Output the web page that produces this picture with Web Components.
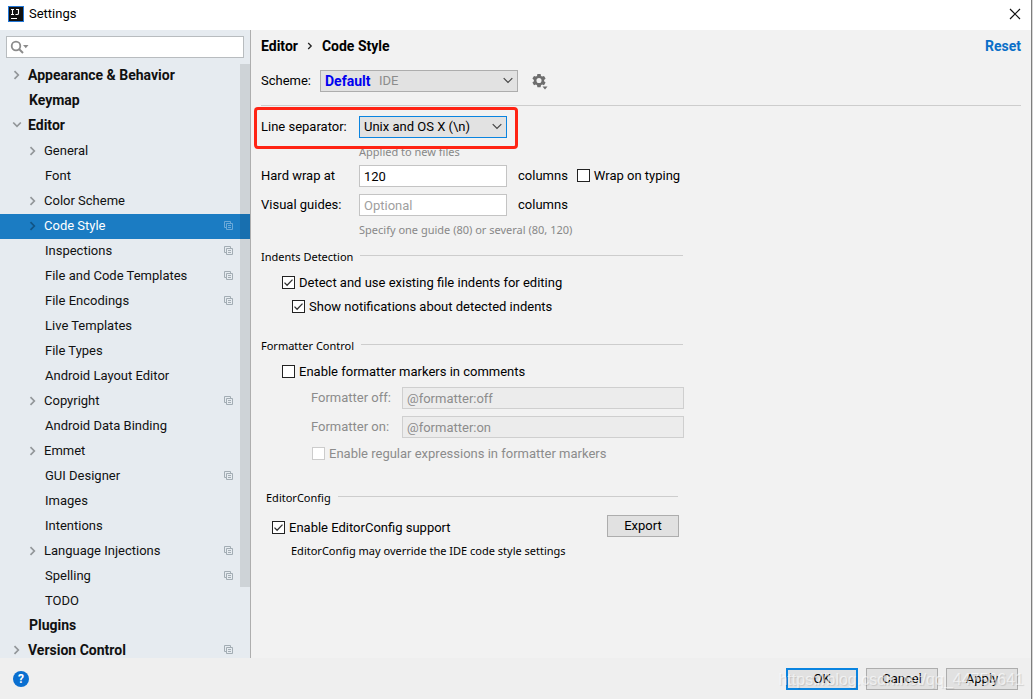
<!DOCTYPE html>
<html lang="en">
<head>
<meta charset="utf-8">
<title>Settings</title>
<style>
  html, body { height: 100%; }
  body {
    margin: 0;
    font: 13px/16px Roboto, "Noto Sans", sans-serif;
    color: #000;
    --small: 11px/16px "Noto Sans", sans-serif;
    --bold: bold 14px/16px Roboto, sans-serif;
    --line: #cdcdcd;
    --border: #adadad;
    --field: #c4c4c4;
    --blue: #0a84e0;
    --muted: #888;
  }
</style>
</head>
<body>
<settings-window></settings-window>

<script>
const define = (name, html, setup) => {
  const template = document.createElement('template');
  template.innerHTML = html;
  customElements.define(name, class extends HTMLElement {
    constructor() {
      super();
      this.attachShadow({ mode: 'open' }).append(template.content.cloneNode(true));
    }
    connectedCallback() { if (setup) setup(this, this.shadowRoot); }
  });
};

/* ---------- basic controls ---------- */

define('check-box', `
<style>
  :host { display: flex; }
  label { display: flex; align-items: flex-start; gap: 4px; white-space: nowrap; }
  input {
    appearance: none; box-sizing: border-box; width: 13px; height: 13px; margin: 1px 0 0;
    border: 1px solid #222; background: #fff;
  }
  input:checked {
    background: #fff url("data:image/svg+xml,%3Csvg xmlns='http://www.w3.org/2000/svg' viewBox='0 0 11 11'%3E%3Cpath d='M1.5 5.6l2.6 2.6 5.4-5.6' fill='none' stroke='%23333' stroke-width='1.3'/%3E%3C/svg%3E");
  }
  :host([disabled]) { color: #8c8c8c; }
  :host([disabled]) input { border-color: #ccc; }
</style>
<label><input type="checkbox"><span><slot></slot></span></label>`,
(host, root) => {
  const box = root.querySelector('input');
  box.checked = host.hasAttribute('checked');
  box.disabled = host.hasAttribute('disabled');
});

define('push-button', `
<style>
  :host { display: block; }
  button {
    box-sizing: border-box; width: 72px; height: 22px; padding: 0; margin: 0;
    border: 1px solid var(--border); background: #e1e1e1; font: inherit; color: #000;
    display: block;
  }
  :host([primary]) button { border: 2px solid var(--blue); }
</style>
<button type="button"><slot></slot></button>`);

define('drop-down', `
<style>
  :host { display: block; position: relative; }
  select {
    appearance: none; display: block; box-sizing: border-box; width: 100%; height: 22px;
    margin: 0; padding: 0 24px 0 4px; border: 1px solid var(--border); border-radius: 0;
    background: #e2e2e2; font: inherit; color: #000;
  }
  :host([focused]) select { border-color: var(--blue); }
  :host([strong]) select { font: var(--bold); color: #0000f0; }
  svg { position: absolute; right: 5px; top: 6px; pointer-events: none; }
  .detail { position: absolute; left: 59px; top: 3px; color: #8c8c8c; pointer-events: none; }
</style>
<select><option></option></select>
<span class="detail"><slot></slot></span>
<svg width="10" height="9" viewBox="0 0 10 9"><path d="M.7 2.2L5 6.5l4.300-4.300" fill="none" stroke="#444" stroke-width="1.2"/></svg>`,
(host, root) => {
  root.querySelector('option').textContent = host.getAttribute('value');
  root.querySelector('select').setAttribute('aria-label', host.getAttribute('label'));
});

define('titled-separator', `
<style>
  :host { display: flex; align-items: center; gap: 7px; font: var(--small); }
  h2 { margin: 0; font: inherit; }
  i { flex: 1; height: 1px; background: var(--line); margin-bottom: 4px; }
</style>
<h2><slot></slot></h2><i></i>`);

/* ---------- sidebar ---------- */

define('tree-item', `
<style>
  :host { display: flex; align-items: center; height: 25px; padding: 0 17px 2px 12px; box-sizing: border-box; color: #111; }
  :host([level="1"]) { padding-left: 28px; }
  :host([strong]) { font: var(--bold); padding-bottom: 4px; }
  :host([selected]) { background: #1b7cc3; color: #fff; }
  .arrow { width: 10px; height: 10px; margin-right: 6px; color: #929699; visibility: hidden; }
  :host(:not([arrow])) .arrow { margin-right: 7px; }
  :host([arrow]) .arrow { visibility: visible; }
  :host([arrow="open"]) .arrow { transform: rotate(90deg); }
  :host([selected]) .arrow { color: #125485; }
  .text { flex: 1; white-space: nowrap; }
  .scope { display: none; color: #a3adb4; }
  :host([scope]) .scope { display: block; }
  :host([selected]) .scope { color: #6ba9d8; }
</style>
<svg class="arrow" viewBox="0 0 10 10"><path d="M2.500 1.200L6.300 5 2.500 8.800" fill="none" stroke="currentColor" stroke-width="1.700"/></svg>
<span class="text"><slot></slot></span>
<svg class="scope" width="9" height="10" viewBox="0 0 9 10"><path d="M2 6.500H.5v-6h6V2M2.500 2.500h6v6h-6zM4 4.500h3M4 6.500h3" fill="none" stroke="currentColor"/></svg>`,
host => host.setAttribute('role', 'treeitem'));

define('search-field', `
<style>
  :host { display: block; position: relative; }
  input {
    display: block; box-sizing: border-box; width: 100%; height: 22px; margin: 0;
    padding: 0 4px 0 26px; border: 1px solid #b8bcbf; background: #fff; font: inherit; outline: 0;
  }
  svg { position: absolute; left: 4px; top: 4px; pointer-events: none; }
</style>
<input type="text" aria-label="Search settings">
<svg width="20" height="14" viewBox="0 0 20 14"><circle cx="6" cy="6" r="4.300" fill="none" stroke="#8b8b8b" stroke-width="1.800"/><path d="M9 9l4 4" stroke="#8b8b8b" stroke-width="2"/><path d="M13 5h5.500l-2.700 3.300z" fill="#8b8b8b"/></svg>`);

define('settings-sidebar', `
<style>
  :host {
    display: flex; flex-direction: column; overflow: hidden;
    background: #e6ebf0; border-right: 1px solid #aeaeae; box-sizing: border-box;
  }
  search-field { margin: 6px; }
  nav { flex: 1; min-height: 0; position: relative; overflow: hidden; }
  .thumb { position: absolute; right: 0; top: 0; width: 10px; height: 523px; background: rgba(0,0,0,.1); }
</style>
<search-field></search-field>
<nav role="tree" aria-label="Settings categories">
  <tree-item strong arrow>Appearance &amp; Behavior</tree-item>
  <tree-item strong>Keymap</tree-item>
  <tree-item strong arrow="open">Editor</tree-item>
  <tree-item level="1" arrow>General</tree-item>
  <tree-item level="1">Font</tree-item>
  <tree-item level="1" arrow>Color Scheme</tree-item>
  <tree-item level="1" arrow scope selected>Code Style</tree-item>
  <tree-item level="1" scope>Inspections</tree-item>
  <tree-item level="1" scope>File and Code Templates</tree-item>
  <tree-item level="1" scope>File Encodings</tree-item>
  <tree-item level="1">Live Templates</tree-item>
  <tree-item level="1">File Types</tree-item>
  <tree-item level="1">Android Layout Editor</tree-item>
  <tree-item level="1" arrow scope>Copyright</tree-item>
  <tree-item level="1">Android Data Binding</tree-item>
  <tree-item level="1" arrow>Emmet</tree-item>
  <tree-item level="1" scope>GUI Designer</tree-item>
  <tree-item level="1">Images</tree-item>
  <tree-item level="1">Intentions</tree-item>
  <tree-item level="1" arrow scope>Language Injections</tree-item>
  <tree-item level="1" scope>Spelling</tree-item>
  <tree-item level="1">TODO</tree-item>
  <tree-item strong>Plugins</tree-item>
  <tree-item strong arrow scope>Version Control</tree-item>
  <div class="thumb"></div>
</nav>`);

/* ---------- code style page ---------- */

define('page-header', `
<style>
  :host { display: flex; justify-content: space-between; align-items: center; font: var(--bold); }
  nav { display: flex; align-items: center; gap: 9px; }
  h1 { margin: 0; font: inherit; }
  a { color: #0a6fc8; text-decoration: none; }
</style>
<nav aria-label="Breadcrumb"><span>Editor</span>
<svg width="6" height="8" viewBox="0 0 6 8"><path d="M1.200 1L4.200 4l-3 3" fill="none" stroke="#222" stroke-width="1.300"/></svg>
<h1>Code Style</h1></nav>
<a href="#reset">Reset</a>`);

define('scheme-bar', `
<style>
  :host { display: flex; align-items: center; padding-bottom: 13px; border-bottom: 1px solid var(--line); }
  span { width: 59px; }
  drop-down { width: 198px; }
  button { margin: 0 0 0 14px; padding: 0; border: 0; background: none; height: 18px; }
  svg { display: block; }
</style>
<span>Scheme:</span>
<drop-down strong label="Scheme" value="Default">IDE</drop-down>
<button type="button" aria-label="Scheme actions">
<svg width="18" height="18" viewBox="0 0 18 18"><g fill="#6e6e6e"><path fill-rule="evenodd" d="M5.400 2h3.200l.4 2 1.100.6 1.900-.7 1.600 2.700-1.500 1.300v1.400l1.500 1.300-1.600 2.700-1.900-.7-1.100.6-.4 2H5.400l-.4-2-1.100-.6-1.900.7-1.600-2.700 1.500-1.300V7.900L.4 6.600l1.600-2.700 1.900.7L5 4zM7 6a2.500 2.500 0 1 0 0 5.100A2.500 2.500 0 0 0 7 6z"/><path d="M10.500 14.500h5l-2.500 3z"/></g></svg>
</button>`);

define('wrap-settings', `
<style>
  :host { display: grid; grid-template-columns: 98px 148px auto auto; justify-content: start; align-items: center; }
  .row { display: grid; grid-column: 1 / -1; grid-template-columns: subgrid; align-items: center; position: relative; }
  .row + .row { margin-top: 7px; }
  .mark { position: absolute; left: -7px; top: -9px; width: 264px; height: 42px; box-sizing: border-box; border: 3px solid #ff2414; border-radius: 4px; z-index: 1; pointer-events: none; }
  input {
    box-sizing: border-box; width: 100%; height: 22px; margin: 0; padding: 0 4px;
    border: 1px solid var(--field); background: #fff; font: inherit; color: #000;
  }
  input::placeholder { color: #a0a0a0; }
  .unit { margin-left: 11px; }
  check-box { margin-left: 9px; }
  .hint { grid-column: 2 / -1; font: var(--small); color: var(--muted); }
  .a { padding: 6px 0 5px; }
  .b { padding-top: 6px; }
</style>
<div class="row"><span>Line separator:</span>
  <drop-down focused label="Line separator" value="Unix and OS X (\\n)"></drop-down>
  <div class="mark"></div></div>
<div class="hint a">Applied to new files</div>
<div class="row"><label for="wrap">Hard wrap at</label><input id="wrap" type="text" value="120">
  <span class="unit">columns</span><check-box>Wrap on typing</check-box></div>
<div class="row"><label for="guides">Visual guides:</label><input id="guides" type="text" placeholder="Optional">
  <span class="unit">columns</span></div>
<div class="hint b">Specify one guide (80) or several (80, 120)</div>`);

define('indents-detection', `
<style>
  :host { display: block; }
  .checks { display: grid; gap: 8px; padding: 10px 0 0 21px; }
  .sub { padding-left: 10px; }
</style>
<titled-separator>Indents Detection</titled-separator>
<div class="checks">
  <check-box checked>Detect and use existing file indents for editing</check-box>
  <check-box class="sub" checked>Show notifications about detected indents</check-box>
</div>`);

define('formatter-control', `
<style>
  :host { display: block; }
  .body { padding: 10px 0 0 21px; }
  .fields { display: grid; grid-template-columns: 91px 1fr; gap: 7px 0; align-items: center; padding: 7px 0 8px 29px; color: #8c8c8c; margin-right: -1px; }
  input {
    box-sizing: border-box; width: 100%; height: 22px; margin: 0; padding: 0 4px;
    border: 1px solid #cfcfcf; background: #ececec; font: inherit; color: #8c8c8c;
  }
  .regex { padding-left: 30px; }
</style>
<titled-separator>Formatter Control</titled-separator>
<div class="body">
  <check-box>Enable formatter markers in comments</check-box>
  <div class="fields">
    <label for="off">Formatter off:</label><input id="off" type="text" value="@formatter:off" disabled>
    <label for="on">Formatter on:</label><input id="on" type="text" value="@formatter:on" disabled>
  </div>
  <check-box class="regex" disabled>Enable regular expressions in formatter markers</check-box>
</div>`);

define('editor-config', `
<style>
  :host { display: block; padding: 0 5px; }
  .line { display: flex; justify-content: space-between; padding: 9px 0 0 6px; margin-right: -1px; }
  check-box { padding-top: 5px; }
  p { margin: 6px 0 0 25px; font: var(--small); }
</style>
<titled-separator>EditorConfig</titled-separator>
<div class="line"><check-box checked>Enable EditorConfig support</check-box><push-button>Export</push-button></div>
<p>EditorConfig may override the IDE code style settings</p>`);

define('code-style-page', `
<style>
  :host { display: block; background: #f2f2f2; padding: 8px 10px 0; overflow: hidden; }
  scheme-bar { margin-top: 16px; }
  wrap-settings { margin-top: 10px; }
  .groups { max-width: 422px; }
  indents-detection { margin-top: 11px; }
  formatter-control { margin-top: 23px; }
  editor-config { margin-top: 28px; }
</style>
<page-header></page-header>
<scheme-bar></scheme-bar>
<wrap-settings></wrap-settings>
<div class="groups">
  <indents-detection></indents-detection>
  <formatter-control></formatter-control>
  <editor-config></editor-config>
</div>`);

/* ---------- window ---------- */

define('title-bar', `
<style>
  :host { display: flex; align-items: center; gap: 5px; height: 30px; padding: 0 10px 2px 8px; background: #fff; box-sizing: border-box; }
  .name { flex: 1; }
  button { margin: 0; padding: 0; border: 0; background: none; }
  svg { display: block; }
</style>
<svg width="16" height="16" viewBox="0 0 16 16"><path d="M0 0h16v16H0z" fill="#2277d8"/><path d="M1 1h14v14H1z" fill="#111"/><path d="M3 3.500h3M4.500 3.500v5M3 8.500h3M8 3.500h2.500v3.700q0 1.300-1.300 1.300H7.500M3 12.500h6" fill="none" stroke="#fff" stroke-width="1.100"/></svg>
<span class="name">Settings</span>
<button type="button" aria-label="Close"><svg width="12" height="12" viewBox="0 0 12 12"><path d="M1 1l10 10M11 1L1 11" stroke="#111" stroke-width="1.200"/></svg></button>`);

define('dialog-footer', `
<style>
  :host { display: flex; align-items: center; gap: 8px; height: 41px; padding: 1px 13px 0; background: #efefef; box-sizing: border-box; position: relative; }
  .help { margin: 0 auto 0 0; padding: 0; width: 16px; height: 16px; border: 0; border-radius: 8px; background: #0a6fd0; color: #fff; font: bold 12px/16px Roboto, sans-serif; }
  .watermark { position: absolute; right: 7px; top: 10px; font: 16px/24px "Liberation Sans", sans-serif; color: rgba(255,255,255,.6); text-shadow: 1px 1px 1px rgba(0,0,0,.12); pointer-events: none; }
</style>
<button class="help" type="button" aria-label="Help">?</button>
<push-button primary>OK</push-button>
<push-button>Cancel</push-button>
<push-button>Apply</push-button>
<span class="watermark">https://blog.csdn.net/qq_44759641</span>`);

define('settings-window', `
<style>
  :host {
    display: grid; grid-template: auto minmax(0, 1fr) auto / 251px minmax(0, 1fr);
    height: 100vh; box-sizing: border-box; padding-right: 1px;
    border-right: 1px solid #d6d6d6; background: #7d7d7d;
  }
  title-bar, dialog-footer { grid-column: 1 / -1; }
</style>
<title-bar></title-bar>
<settings-sidebar></settings-sidebar>
<code-style-page></code-style-page>
<dialog-footer></dialog-footer>`);
</script>
</body>
</html>
